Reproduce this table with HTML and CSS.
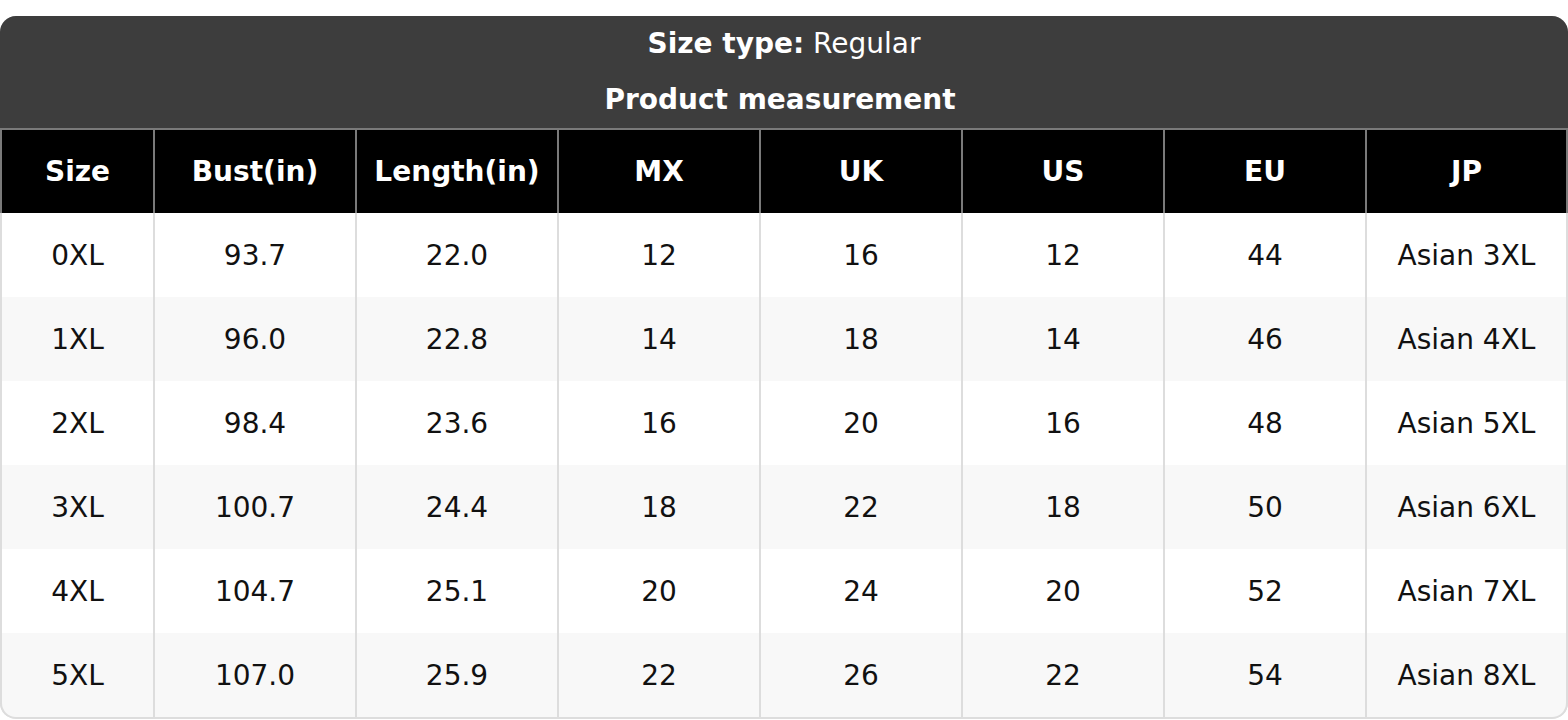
FILE: index.html
```html
<!DOCTYPE html>
<html lang="en">
<head>
<meta charset="utf-8">
<title>Size chart</title>
<link rel="stylesheet" href="styles.css">
</head>
<body>
<div class="card">
  <div class="title-block">
    <div class="title-line"><b>Size type:</b> Regular</div>
    <div class="title-line shifted"><b>Product measurement</b></div>
  </div>
  <div class="row head">
    <div class="cell">Size</div>
    <div class="cell">Bust(in)</div>
    <div class="cell">Length(in)</div>
    <div class="cell">MX</div>
    <div class="cell">UK</div>
    <div class="cell">US</div>
    <div class="cell">EU</div>
    <div class="cell">JP</div>
  </div>
  <div class="row data">
    <div class="cell">0XL</div><div class="cell">93.7</div><div class="cell">22.0</div><div class="cell">12</div><div class="cell">16</div><div class="cell">12</div><div class="cell">44</div><div class="cell">Asian 3XL</div>
  </div>
  <div class="row data alt">
    <div class="cell">1XL</div><div class="cell">96.0</div><div class="cell">22.8</div><div class="cell">14</div><div class="cell">18</div><div class="cell">14</div><div class="cell">46</div><div class="cell">Asian 4XL</div>
  </div>
  <div class="row data">
    <div class="cell">2XL</div><div class="cell">98.4</div><div class="cell">23.6</div><div class="cell">16</div><div class="cell">20</div><div class="cell">16</div><div class="cell">48</div><div class="cell">Asian 5XL</div>
  </div>
  <div class="row data alt">
    <div class="cell">3XL</div><div class="cell">100.7</div><div class="cell">24.4</div><div class="cell">18</div><div class="cell">22</div><div class="cell">18</div><div class="cell">50</div><div class="cell">Asian 6XL</div>
  </div>
  <div class="row data">
    <div class="cell">4XL</div><div class="cell">104.7</div><div class="cell">25.1</div><div class="cell">20</div><div class="cell">24</div><div class="cell">20</div><div class="cell">52</div><div class="cell">Asian 7XL</div>
  </div>
  <div class="row data alt last">
    <div class="cell">5XL</div><div class="cell">107.0</div><div class="cell">25.9</div><div class="cell">22</div><div class="cell">26</div><div class="cell">22</div><div class="cell">54</div><div class="cell">Asian 8XL</div>
  </div>
</div>
</body>
</html>
```

FILE: styles.css
```css
html, body {
  margin: 0;
  padding: 0;
  background: #ffffff;
}
body {
  padding-top: 16px;
  font-family: "DejaVu Sans", "Liberation Sans", sans-serif;
  font-size: 28px;
  color: #111111;
}
.card {
  width: 1568px;
  border-radius: 16px;
  overflow: hidden;
  background: #dddddd;
  padding-bottom: 2px;
}
.title-block {
  background: #3d3d3d;
  color: #ffffff;
  text-align: center;
}
.title-line {
  height: 56px;
  line-height: 56px;
}
.title-line.shifted {
  padding-right: 8px;
}
.title-line b {
  font-weight: bold;
}
.row {
  display: grid;
  grid-template-columns: 151px repeat(6, 200px) 1fr;
  column-gap: 2px;
  padding: 0 2px;
}
.cell {
  display: flex;
  align-items: center;
  justify-content: center;
  white-space: nowrap;
}
.head {
  background: #7a7a7a;
  border-top: 2px solid #7a7a7a;
}
.head .cell {
  background: #000000;
  color: #ffffff;
  font-weight: bold;
  height: 83px;
}
.data {
  background: #dddddd;
}
.data .cell {
  background: #ffffff;
  height: 84px;
}
.data.alt .cell {
  background: #f8f8f8;
}
.last .cell:first-child {
  border-bottom-left-radius: 14px;
}
.last .cell:last-child {
  border-bottom-right-radius: 14px;
}
```
